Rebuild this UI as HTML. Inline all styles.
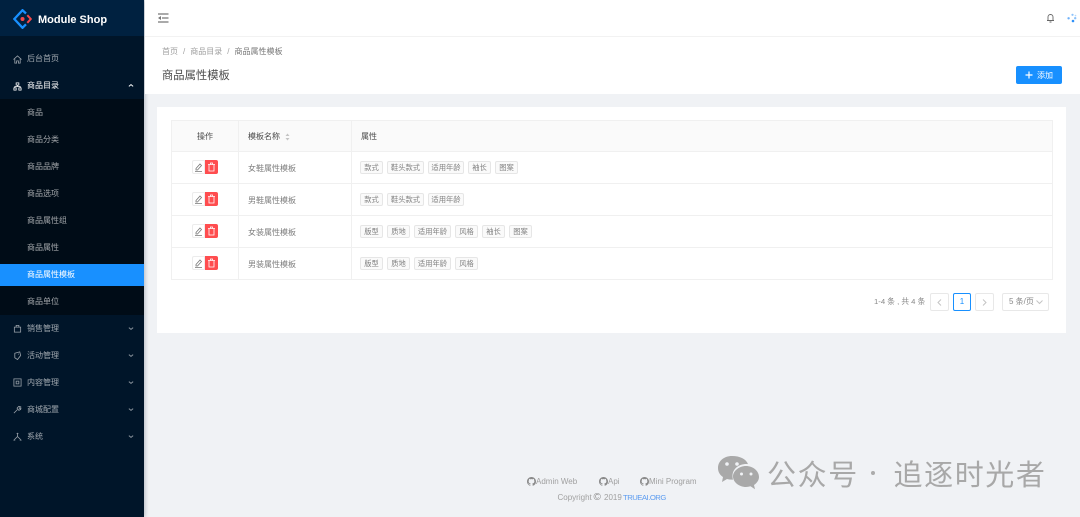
<!DOCTYPE html>
<html><head><meta charset="utf-8"><style>
*{box-sizing:border-box}
html{background:#f0f2f5}
html,body{margin:0;padding:0;width:1080px;height:517px;overflow:hidden;font-family:"Liberation Sans","Noto Sans CJK SC",sans-serif}
body{background:#f0f2f5}
#w{position:absolute;left:0;top:0;width:1080px;height:517px;overflow:hidden;filter:blur(.35px)}
.a{position:absolute;white-space:nowrap}
.side{position:absolute;left:0;top:0;width:144px;height:517px;background:#001529;box-shadow:1px 0 4px rgba(0,21,41,.25)}
.m{position:absolute;left:27px;font-size:8px;line-height:12px;color:rgba(255,255,255,.62);white-space:nowrap}
.ic{position:absolute;left:13px;width:9px;height:9px;fill:none;stroke:rgba(255,255,255,.6);stroke-width:.9}
.ch{position:absolute;left:128px;width:6px;height:5px;fill:none;stroke:rgba(255,255,255,.55);stroke-width:1.1}
.t{position:absolute;height:13px;border:1px solid #e6e6e6;background:#fafafa;border-radius:2px;font-size:7.3px;line-height:11px;color:#808080;text-align:center;white-space:nowrap}
.c{position:absolute;font-size:8px;line-height:12px;color:#7d7d7d;white-space:nowrap}
.l{position:absolute;background:#f0f0f0}
.e{position:absolute;left:192px;width:13px;height:14px;background:#fff;border:1px solid #ececec;border-radius:2px 0 0 2px}
.d{position:absolute;left:205px;width:13px;height:14px;background:#ff4d4f;border-radius:0 2px 2px 0}
.e svg{position:absolute;left:1px;top:1px;width:9px;height:10px;fill:none}
.d svg{position:absolute;left:2px;top:2px;width:9px;height:10px;fill:none}
.f{position:absolute;font-size:8px;line-height:12px;color:#a0a0a0;white-space:nowrap}
.g{position:absolute;width:9px;height:9px;fill:#8a8a8a}
</style></head><body><div id="w">
<div class="side">
<div class="a" style="left:0;top:0;width:144px;height:36px;background:#002140"></div>
<svg class="a" style="left:13px;top:9px" width="19" height="20" viewBox="0 0 19 20"><path d="M13 4.500 9.500 1.200 1.300 10l8.200 8.800 3.500-3.500" fill="none" stroke="#1890ff" stroke-width="2.300"/><path d="M14.300 6.200 17.800 10l-3.500 3.800" fill="none" stroke="#f5484a" stroke-width="2"/><circle cx="9.500" cy="10" r="2" fill="#f5484a"/></svg>
<div class="a" style="left:38px;top:12.500px;font-size:11px;line-height:15px;font-weight:bold;color:#fff">Module Shop</div>

<div class="a" style="left:0;top:99px;width:144px;height:216px;background:#000c17"></div>
<div class="a" style="left:0;top:264px;width:144px;height:22px;background:#1890ff"></div>

<svg class="ic" style="top:54.500px" viewBox="0 0 10 10"><path d="M.5 5 5 1l4.500 4M2 4v5h2V6.500h2V9h2V4"/></svg>
<div class="m" style="top:52.500px">后台首页</div>
<svg class="ic" style="top:81.500px;stroke:#fff" viewBox="0 0 10 10"><path d="M3.500 1h3v2.500h-3zM1 6.500h2.500V9H1zM6.500 6.500H9V9H6.500zM2 6.500V5h6v1.500M5 3.500V5"/></svg>
<div class="m" style="top:79.500px;color:#fff">商品目录</div>
<svg class="ch" style="top:83px;stroke:#fff" viewBox="0 0 7 5"><path d="M1 3.500 3.500 1.500 6 3.500"/></svg>

<div class="m" style="top:106.500px">商品</div>
<div class="m" style="top:133.500px">商品分类</div>
<div class="m" style="top:160.500px">商品品牌</div>
<div class="m" style="top:187.500px">商品选项</div>
<div class="m" style="top:214.500px">商品属性组</div>
<div class="m" style="top:241.500px">商品属性</div>
<div class="m" style="top:268.500px;color:#fff">商品属性模板</div>
<div class="m" style="top:295.500px">商品单位</div>

<svg class="ic" style="top:323.500px" viewBox="0 0 10 10"><path d="M1.500 3.500h7V9h-7zM3.500 3.500V1.500h3v2"/></svg>
<div class="m" style="top:322.500px">销售管理</div>
<svg class="ch" style="top:326px" viewBox="0 0 7 5"><path d="M1 1.500 3.500 3.500 6 1.500"/></svg>
<svg class="ic" style="top:350.500px" viewBox="0 0 10 10"><path d="M2 2.500 7.500 1 8.500 5 5 9.500 2 7.500zM5.500 3.500h1"/></svg>
<div class="m" style="top:349.500px">活动管理</div>
<svg class="ch" style="top:353px" viewBox="0 0 7 5"><path d="M1 1.500 3.500 3.500 6 1.500"/></svg>
<svg class="ic" style="top:378px" viewBox="0 0 10 10"><path d="M1 1h8v8H1zM3.500 3.500h3v3h-3z"/></svg>
<div class="m" style="top:376.500px">内容管理</div>
<svg class="ch" style="top:380px" viewBox="0 0 7 5"><path d="M1 1.500 3.500 3.500 6 1.500"/></svg>
<svg class="ic" style="top:405px" viewBox="0 0 10 10"><path d="M1 9 5 5M4.500 3.500 6.500 1.500 8.500 2 7 3.500 8 4.500 9 3 8.500 5 6.500 6z"/></svg>
<div class="m" style="top:403.500px">商城配置</div>
<svg class="ch" style="top:407px" viewBox="0 0 7 5"><path d="M1 1.500 3.500 3.500 6 1.500"/></svg>
<svg class="ic" style="top:432px" viewBox="0 0 10 10"><path d="M5 1v4M5 5 1.500 8.500M5 5l3.500 3.500M.5 9h2M7.500 9h2M4 1.500h2"/></svg>
<div class="m" style="top:430.500px">系统</div>
<svg class="ch" style="top:434px" viewBox="0 0 7 5"><path d="M1 1.500 3.500 3.500 6 1.500"/></svg>
</div>

<!-- header -->
<div class="a" style="left:145px;top:0;width:935px;height:37px;background:#fff;border-bottom:1px solid #f2f2f2"></div>
<svg class="a" style="left:158px;top:13px" width="11" height="10" viewBox="0 0 11 10"><path d="M0 1h10.500M4 5h6.500M0 9h10.500" stroke="#777" stroke-width="1.300"/><path d="M0 5 3 3v4z" fill="#777"/></svg>
<svg class="a" style="left:1046px;top:13px" width="9" height="10" viewBox="0 0 9 10"><path d="M2 7.500V4a2.500 2.500 0 0 1 5 0v3.500zM1 7.500h7M3.500 9h2" fill="none" stroke="#666" stroke-width=".9"/></svg>
<svg class="a" style="left:1067px;top:13px" width="10" height="10" viewBox="0 0 10 10"><circle cx="5.500" cy="1.800" r="1.100" fill="#8cc2fb"/><circle cx="1.600" cy="5.300" r="1.200" fill="#6db0fa"/><circle cx="8.200" cy="5.200" r="1.200" fill="#8cc2fb"/><circle cx="6" cy="8" r="1.300" fill="#2e90f8"/><circle cx="8.500" cy="2.600" r=".8" fill="#b5d8fd"/></svg>

<!-- page header -->
<div class="a" style="left:145px;top:37px;width:935px;height:57px;background:#fff"></div>
<div class="a" style="left:162px;top:46px;font-size:8px;line-height:12px;color:#a0a0a0">首页<span style="margin:0 5px">/</span>商品目录<span style="margin:0 5px">/</span><span style="color:#777">商品属性模板</span></div>
<div class="a" style="left:162px;top:68px;font-size:11.300px;line-height:16px;color:#4a4a4a">商品属性模板</div>
<div class="a" style="left:1016px;top:66px;width:46px;height:18px;background:#1890ff;border-radius:2px"></div>
<svg class="a" style="left:1024.500px;top:70.500px" width="8" height="8" viewBox="0 0 8 8"><path d="M4 .5v7M.5 4h7" stroke="#fff" stroke-width="1.200"/></svg>
<div class="a" style="left:1037px;top:69.500px;font-size:8px;line-height:12px;color:#fff">添加</div>

<!-- card -->
<div class="a" style="left:157px;top:107px;width:909px;height:226px;background:#fff"></div>
<div class="a" style="left:171px;top:121px;width:882px;height:30px;background:#fafafa"></div>
<div class="l" style="left:171px;top:120px;width:882px;height:1px"></div>
<div class="l" style="left:171px;top:151px;width:882px;height:1px"></div>
<div class="l" style="left:171px;top:183px;width:882px;height:1px"></div>
<div class="l" style="left:171px;top:215px;width:882px;height:1px"></div>
<div class="l" style="left:171px;top:247px;width:882px;height:1px"></div>
<div class="l" style="left:171px;top:279px;width:882px;height:1px"></div>
<div class="l" style="left:171px;top:120px;width:1px;height:160px"></div>
<div class="l" style="left:238px;top:120px;width:1px;height:160px"></div>
<div class="l" style="left:351px;top:120px;width:1px;height:160px"></div>
<div class="l" style="left:1052px;top:120px;width:1px;height:160px"></div>

<div class="c" style="left:197px;top:130.500px;color:#4a4a4a">操作</div>
<div class="c" style="left:248px;top:130.500px;color:#4a4a4a">模板名称</div>
<svg class="a" style="left:285px;top:133px" width="5" height="8" viewBox="0 0 5 8"><path d="M2.500.5 4.500 3h-4zM2.500 7.500 .5 5h4z" fill="#c4c4c4"/></svg>
<div class="c" style="left:361px;top:130.500px;color:#4a4a4a">属性</div>

<div class="c" style="left:248px;top:162.500px">女鞋属性模板</div>
<div class="c" style="left:248px;top:194.500px">男鞋属性模板</div>
<div class="c" style="left:248px;top:226.500px">女装属性模板</div>
<div class="c" style="left:248px;top:258.500px">男装属性模板</div>

<div class="e" style="top:160px"><svg viewBox="0 0 9 10"><path d="M2 6.500 6 2l1.500 1.500L3.500 8H2zM1 9.500h7" stroke="#777" stroke-width=".8"/></svg></div>
<div class="d" style="top:160px"><svg viewBox="0 0 9 10"><path d="M1 2.500h7M3.500 2.500V1h2v1.500M2 2.500V9h5V2.500" stroke="#fff" stroke-width=".8"/></svg></div>
<div class="e" style="top:192px"><svg viewBox="0 0 9 10"><path d="M2 6.500 6 2l1.500 1.500L3.500 8H2zM1 9.500h7" stroke="#777" stroke-width=".8"/></svg></div>
<div class="d" style="top:192px"><svg viewBox="0 0 9 10"><path d="M1 2.500h7M3.500 2.500V1h2v1.500M2 2.500V9h5V2.500" stroke="#fff" stroke-width=".8"/></svg></div>
<div class="e" style="top:224px"><svg viewBox="0 0 9 10"><path d="M2 6.500 6 2l1.500 1.500L3.500 8H2zM1 9.500h7" stroke="#777" stroke-width=".8"/></svg></div>
<div class="d" style="top:224px"><svg viewBox="0 0 9 10"><path d="M1 2.500h7M3.500 2.500V1h2v1.500M2 2.500V9h5V2.500" stroke="#fff" stroke-width=".8"/></svg></div>
<div class="e" style="top:256px"><svg viewBox="0 0 9 10"><path d="M2 6.500 6 2l1.500 1.500L3.500 8H2zM1 9.500h7" stroke="#777" stroke-width=".8"/></svg></div>
<div class="d" style="top:256px"><svg viewBox="0 0 9 10"><path d="M1 2.500h7M3.500 2.500V1h2v1.500M2 2.500V9h5V2.500" stroke="#fff" stroke-width=".8"/></svg></div>

<div class="t" style="left:360px;top:161px;width:23px">款式</div>
<div class="t" style="left:387px;top:161px;width:37px">鞋头款式</div>
<div class="t" style="left:428px;top:161px;width:36px">适用年龄</div>
<div class="t" style="left:468px;top:161px;width:23px">袖长</div>
<div class="t" style="left:495px;top:161px;width:23px">图案</div>

<div class="t" style="left:360px;top:193px;width:23px">款式</div>
<div class="t" style="left:387px;top:193px;width:37px">鞋头款式</div>
<div class="t" style="left:428px;top:193px;width:36px">适用年龄</div>

<div class="t" style="left:360px;top:225px;width:23px">版型</div>
<div class="t" style="left:387px;top:225px;width:23px">质地</div>
<div class="t" style="left:414px;top:225px;width:37px">适用年龄</div>
<div class="t" style="left:455px;top:225px;width:23px">风格</div>
<div class="t" style="left:482px;top:225px;width:23px">袖长</div>
<div class="t" style="left:509px;top:225px;width:23px">图案</div>

<div class="t" style="left:360px;top:257px;width:23px">版型</div>
<div class="t" style="left:387px;top:257px;width:23px">质地</div>
<div class="t" style="left:414px;top:257px;width:37px">适用年龄</div>
<div class="t" style="left:455px;top:257px;width:23px">风格</div>

<!-- pagination -->
<div class="c" style="left:874px;top:296px;color:#888;font-size:7.7px">1-4 条 , 共 4 条</div>
<div class="a" style="left:930px;top:293px;width:19px;height:18px;border:1px solid #e8e8e8;border-radius:2px"></div>
<svg class="a" style="left:937px;top:299px" width="5" height="7" viewBox="0 0 5 7"><path d="M4 .5 1 3.500 4 6.500" fill="none" stroke="#c4c4c4"/></svg>
<div class="a" style="left:953px;top:293px;width:18px;height:18px;border:1px solid #1890ff;border-radius:2px;color:#1890ff;font-size:8px;line-height:16px;text-align:center">1</div>
<div class="a" style="left:975px;top:293px;width:19px;height:18px;border:1px solid #e8e8e8;border-radius:2px"></div>
<svg class="a" style="left:982px;top:299px" width="5" height="7" viewBox="0 0 5 7"><path d="M1 .5 4 3.500 1 6.500" fill="none" stroke="#c4c4c4"/></svg>
<div class="a" style="left:1002px;top:293px;width:47px;height:18px;border:1px solid #e8e8e8;border-radius:2px"></div>
<div class="c" style="left:1009px;top:296px;color:#888">5 条/页</div>
<svg class="a" style="left:1036px;top:300px" width="7" height="5" viewBox="0 0 7 5"><path d="M.5 .5 3.500 3.500 6.500 .5" fill="none" stroke="#c4c4c4"/></svg>

<!-- footer -->
<svg class="g" style="left:527px;top:477px" viewBox="0 0 16 16"><path d="M8 0C3.580 0 0 3.580 0 8c0 3.540 2.290 6.530 5.470 7.590.4.070.55-.17.55-.38 0-.19-.01-.82-.01-1.490-2.010.37-2.530-.49-2.690-.94-.09-.23-.48-.94-.82-1.130-.28-.15-.68-.52-.01-.53.63-.01 1.080.58 1.230.82.72 1.210 1.870.87 2.330.66.070-.52.28-.87.51-1.070-1.780-.2-3.640-.89-3.640-3.950 0-.87.31-1.590.82-2.150-.08-.2-.36-1.020.08-2.120 0 0 .67-.21 2.200.82.64-.18 1.320-.27 2-.27.68 0 1.360.09 2 .27 1.530-1.040 2.200-.82 2.200-.82.44 1.100.16 1.920.08 2.120.51.56.82 1.270.82 2.150 0 3.070-1.870 3.750-3.650 3.950.29.25.54.73.54 1.480 0 1.070-.01 1.930-.01 2.200 0 .21.15.46.55.38A8.013 8.013 0 0016 8c0-4.420-3.580-8-8-8z"/></svg>
<div class="f" style="left:536px;top:476px">Admin Web</div>
<svg class="g" style="left:599px;top:477px" viewBox="0 0 16 16"><path d="M8 0C3.580 0 0 3.580 0 8c0 3.540 2.290 6.530 5.470 7.590.4.070.55-.17.55-.38 0-.19-.01-.82-.01-1.490-2.010.37-2.530-.49-2.690-.94-.09-.23-.48-.94-.82-1.130-.28-.15-.68-.52-.01-.53.63-.01 1.080.58 1.230.82.72 1.210 1.870.87 2.330.66.070-.52.28-.87.51-1.070-1.780-.2-3.640-.89-3.640-3.950 0-.87.31-1.590.82-2.150-.08-.2-.36-1.020.08-2.120 0 0 .67-.21 2.200.82.64-.18 1.320-.27 2-.27.68 0 1.360.09 2 .27 1.530-1.040 2.200-.82 2.200-.82.44 1.100.16 1.920.08 2.120.51.56.82 1.270.82 2.150 0 3.070-1.870 3.750-3.650 3.950.29.25.54.73.54 1.480 0 1.070-.01 1.930-.01 2.200 0 .21.15.46.55.38A8.013 8.013 0 0016 8c0-4.420-3.580-8-8-8z"/></svg>
<div class="f" style="left:608px;top:476px">Api</div>
<svg class="g" style="left:640px;top:477px" viewBox="0 0 16 16"><path d="M8 0C3.580 0 0 3.580 0 8c0 3.540 2.290 6.530 5.470 7.590.4.070.55-.17.55-.38 0-.19-.01-.82-.01-1.490-2.010.37-2.530-.49-2.690-.94-.09-.23-.48-.94-.82-1.130-.28-.15-.68-.52-.01-.53.63-.01 1.080.58 1.230.82.72 1.210 1.870.87 2.330.66.070-.52.28-.87.51-1.070-1.780-.2-3.640-.89-3.640-3.950 0-.87.31-1.590.82-2.150-.08-.2-.36-1.020.08-2.120 0 0 .67-.21 2.200.82.64-.18 1.320-.27 2-.27.68 0 1.360.09 2 .27 1.530-1.040 2.200-.82 2.200-.82.44 1.100.16 1.920.08 2.120.51.56.82 1.270.82 2.150 0 3.070-1.870 3.750-3.650 3.950.29.25.54.73.54 1.480 0 1.070-.01 1.930-.01 2.200 0 .21.15.46.55.38A8.013 8.013 0 0016 8c0-4.420-3.580-8-8-8z"/></svg>
<div class="f" style="left:649px;top:476px">Mini Program</div>
<div class="f" style="left:557.500px;top:492px;font-size:8px">Copyright</div>
<div class="f" style="left:593.500px;top:492px;font-size:10px;color:#8a8a8a">©</div>
<div class="f" style="left:604px;top:492px;font-size:8px">2019</div>
<div class="f" style="left:623px;top:492px;font-size:7.700px;letter-spacing:-.5px;color:#5c9cf0">TRUEAI.ORG</div>

<!-- watermark -->
<svg class="a" style="left:717px;top:455px" width="43" height="37" viewBox="0 0 43 37"><path d="M15 1C7 1 1 6 1 13c0 4 2 7 5 9l-1 5 5-3c2 .6 4 .8 6 .6-.4-1.400-.5-2.600-.5-3.600 0-7 6-12 14-12 .5 0 1 0 1.500.1C29 4 23 1 15 1z" fill="#a9a9a9"/><path d="M29 11c-7 0-13 5-13 10.500S22 32 29 32c1.500 0 3-.3 4.500-.7l4.500 3-1-4.300c3-2 5-5 5-8C42 16 36 11 29 11z" fill="#a9a9a9"/><circle cx="10" cy="9" r="1.800" fill="#f0f2f5"/><circle cx="20" cy="9" r="1.800" fill="#f0f2f5"/><circle cx="24.500" cy="19" r="1.500" fill="#f0f2f5"/><circle cx="34" cy="19" r="1.500" fill="#f0f2f5"/></svg>
<div class="a" style="left:767px;top:455px;font-size:29px;line-height:36px;letter-spacing:1.600px;color:#a8a8a8;font-family:'Noto Sans CJK SC','Liberation Sans',sans-serif;font-weight:400">公众号</div>
<div class="a" style="left:871px;top:471px;width:4px;height:4px;border-radius:50%;background:#ababab"></div>
<div class="a" style="left:893.500px;top:455px;font-size:29px;line-height:36px;letter-spacing:1.600px;color:#a8a8a8;font-family:'Noto Sans CJK SC','Liberation Sans',sans-serif;font-weight:400">追逐时光者</div>
</div></body></html>
